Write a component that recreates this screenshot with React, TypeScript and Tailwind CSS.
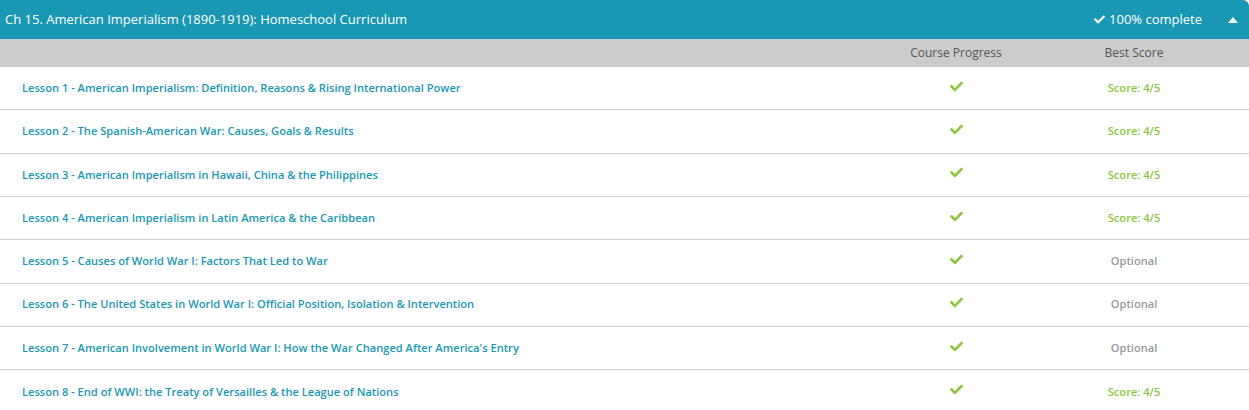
import React from "react";
import { FaCheck } from "react-icons/fa";

const lessons: { title: string; score: string }[] = [
  { title: "Lesson 1 - American Imperialism: Definition, Reasons & Rising International Power", score: "Score: 4/5" },
  { title: "Lesson 2 - The Spanish-American War: Causes, Goals & Results", score: "Score: 4/5" },
  { title: "Lesson 3 - American Imperialism in Hawaii, China & the Philippines", score: "Score: 4/5" },
  { title: "Lesson 4 - American Imperialism in Latin America & the Caribbean", score: "Score: 4/5" },
  { title: "Lesson 5 - Causes of World War I: Factors That Led to War", score: "Optional" },
  { title: "Lesson 6 - The United States in World War I: Official Position, Isolation & Intervention", score: "Optional" },
  { title: "Lesson 7 - American Involvement in World War I: How the War Changed After America's Entry", score: "Optional" },
  { title: "Lesson 8 - End of WWI: the Treaty of Versailles & the League of Nations", score: "Score: 4/5" },
];

export default function App() {
  return (
    <div className="w-[1249px] bg-white font-['Open_Sans',sans-serif]">
      <div className="flex h-[39px] items-center justify-between rounded-tr-[6px] bg-[#1997b3] pl-[5px] pr-[11px] text-[13px] text-white">
        <span>Ch 15. American Imperialism (1890-1919): Homeschool Curriculum</span>
        <div className="flex items-center">
          <FaCheck className="mr-[4px] h-[11px] w-[11px]" />
          <span>100% complete</span>
          <svg className="ml-[26px]" width="10" height="6" viewBox="0 0 10 6">
            <path d="M0 6 L5 0 L10 6 Z" fill="white" />
          </svg>
        </div>
      </div>
      <div className="grid h-[28px] grid-cols-[1fr_178px_178px_26px] items-center bg-[#cccccc] text-[12px] text-[#555555]">
        <div />
        <div className="text-center">Course Progress</div>
        <div className="text-center">Best Score</div>
        <div />
      </div>
      {lessons.map((l, i) => (
        <div
          key={i}
          className={`grid h-[43.33px] grid-cols-[1fr_178px_178px_26px] items-center text-[11.1px] font-semibold ${
            i < lessons.length - 1 ? "border-b border-[#cfcfcf]" : ""
          }`}
        >
          <div className="pl-[22px] text-[#1997b3]">{l.title}</div>
          <div className="flex justify-center">
            <FaCheck className="-mt-[4px] h-[13px] w-[13px] text-[#8cc63f]" />
          </div>
          <div className={`text-center ${l.score === "Optional" ? "text-[#999999]" : "text-[#8cc63f]"}`}>{l.score}</div>
          <div />
        </div>
      ))}
    </div>
  );
}
